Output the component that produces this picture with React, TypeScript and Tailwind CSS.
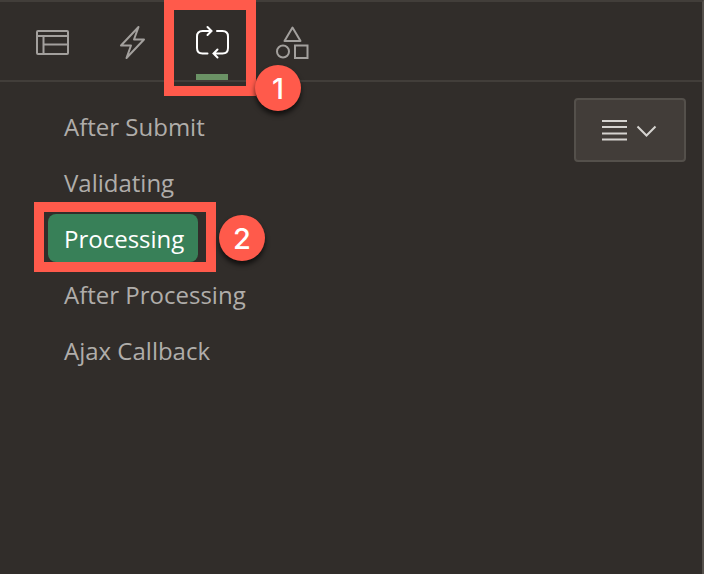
import type { ReactNode } from "react";

type Tab = { label: string; icon: ReactNode };

const tabs: Tab[] = [
  {
    label: "Rendering",
    icon: (
      <>
        <rect x="5" y="9" width="31" height="23" rx="1" />
        <path d="M5 14H36M11.500 14V32M11.500 22.500H36" />
      </>
    ),
  },
  {
    label: "Dynamic Actions",
    icon: <path d="M26.500 5L9 23.500H19L14.500 36L32 17.500H22Z" strokeLinejoin="round" />,
  },
  {
    label: "Processing",
    icon: (
      <>
        <path d="M15.500 31.500H10.500Q5 31.500 5 26V14.500Q5 9 10.500 9H19.500M15.500 5L19.500 9L15.500 13" />
        <path d="M25 9H30.500Q36 9 36 14.500V26Q36 31.500 30.500 31.500H21.500M25.500 27.500L21.500 31.500L25.500 35.500" />
      </>
    ),
  },
  {
    label: "Page Shared Components",
    icon: (
      <>
        <path d="M20.500 5.500L28.500 19H12.500Z" strokeLinejoin="round" />
        <circle cx="11" cy="29.500" r="6" />
        <rect x="23" y="23.500" width="12.500" height="12.500" />
      </>
    ),
  },
];

const points = ["After Submit", "Validating", "Processing", "After Processing", "Ajax Callback"];

function Badge({ children, className }: { children: ReactNode; className: string }) {
  return (
    <span
      className={`pointer-events-none absolute z-10 flex size-[46px] items-center justify-center rounded-full bg-[#ff5a4b] pt-0.5 font-[Inter,'Liberation_Sans',sans-serif] text-[29px] font-medium text-white shadow-[0_4px_5px_rgba(0,0,0,0.65)] ${className}`}
    >
      {children}
    </span>
  );
}

export default function App() {
  return (
    <main className="min-h-screen border-t-2 border-r-2 border-t-[#423e3a] border-r-[#54504b] bg-[#312d2a] font-['Open_Sans','Noto_Sans',sans-serif]">
      <nav aria-label="Page designer" className="flex h-20 border-b-2 border-[#423e3a] px-3">
        {tabs.map((tab, index) => {
          const active = index === 2;
          return (
            <div key={tab.label} className="relative w-20">
              <button
                type="button"
                aria-label={tab.label}
                aria-pressed={active}
                className={`flex h-full w-full flex-col items-center justify-between pt-5 ${active ? "text-white" : "text-[#a3a09d]"}`}
              >
                <svg viewBox="0 0 40 40" className="size-10" fill="none" stroke="currentColor" strokeWidth="2" strokeLinecap="round" aria-hidden="true">
                  {tab.icon}
                </svg>
                {active && <span className="h-1.5 w-8 bg-[#6b9265]" />}
              </button>
              {active && (
                <>
                  <span className="pointer-events-none absolute -top-0.5 -right-1 -left-2 h-24 border-10 border-[#ff5a4b]" />
                  <Badge className="top-[63px] left-[83px]">1</Badge>
                </>
              )}
            </div>
          );
        })}
      </nav>
      <div className="flex items-start justify-between pr-4 pl-12">
        <ul className="flex flex-col items-start gap-2 pt-5">
          {points.map((point) => {
            const selected = point === "Processing";
            return (
              <li key={point} className="relative">
                <button
                  type="button"
                  aria-pressed={selected}
                  className={`h-12 rounded-lg pt-0.5 pr-3.5 pl-4 text-2xl whitespace-nowrap ${selected ? "bg-[#388058] text-white" : "text-[#b0adaa]"}`}
                >
                  {point}
                </button>
                {selected && (
                  <>
                    <span className="pointer-events-none absolute -top-3 -right-[18px] -bottom-2.5 -left-3.5 border-10 border-[#ff5a4b]" />
                    <Badge className="top-px left-[171px]">2</Badge>
                  </>
                )}
              </li>
            );
          })}
        </ul>
        <button
          type="button"
          aria-label="Menu"
          className="mt-4 flex h-16 w-28 items-center justify-center rounded border-2 border-[#54504b] bg-[#423d39]"
        >
          <svg viewBox="0 0 56 32" className="h-8 w-14" fill="none" stroke="#d5d3d0" strokeWidth="2" aria-hidden="true">
            <path d="M0 7H25M0 13H25M0 19.500H25M0 25.500H25M35.500 12.500L44.500 21.500L53.500 12.500" />
          </svg>
        </button>
      </div>
    </main>
  );
}
